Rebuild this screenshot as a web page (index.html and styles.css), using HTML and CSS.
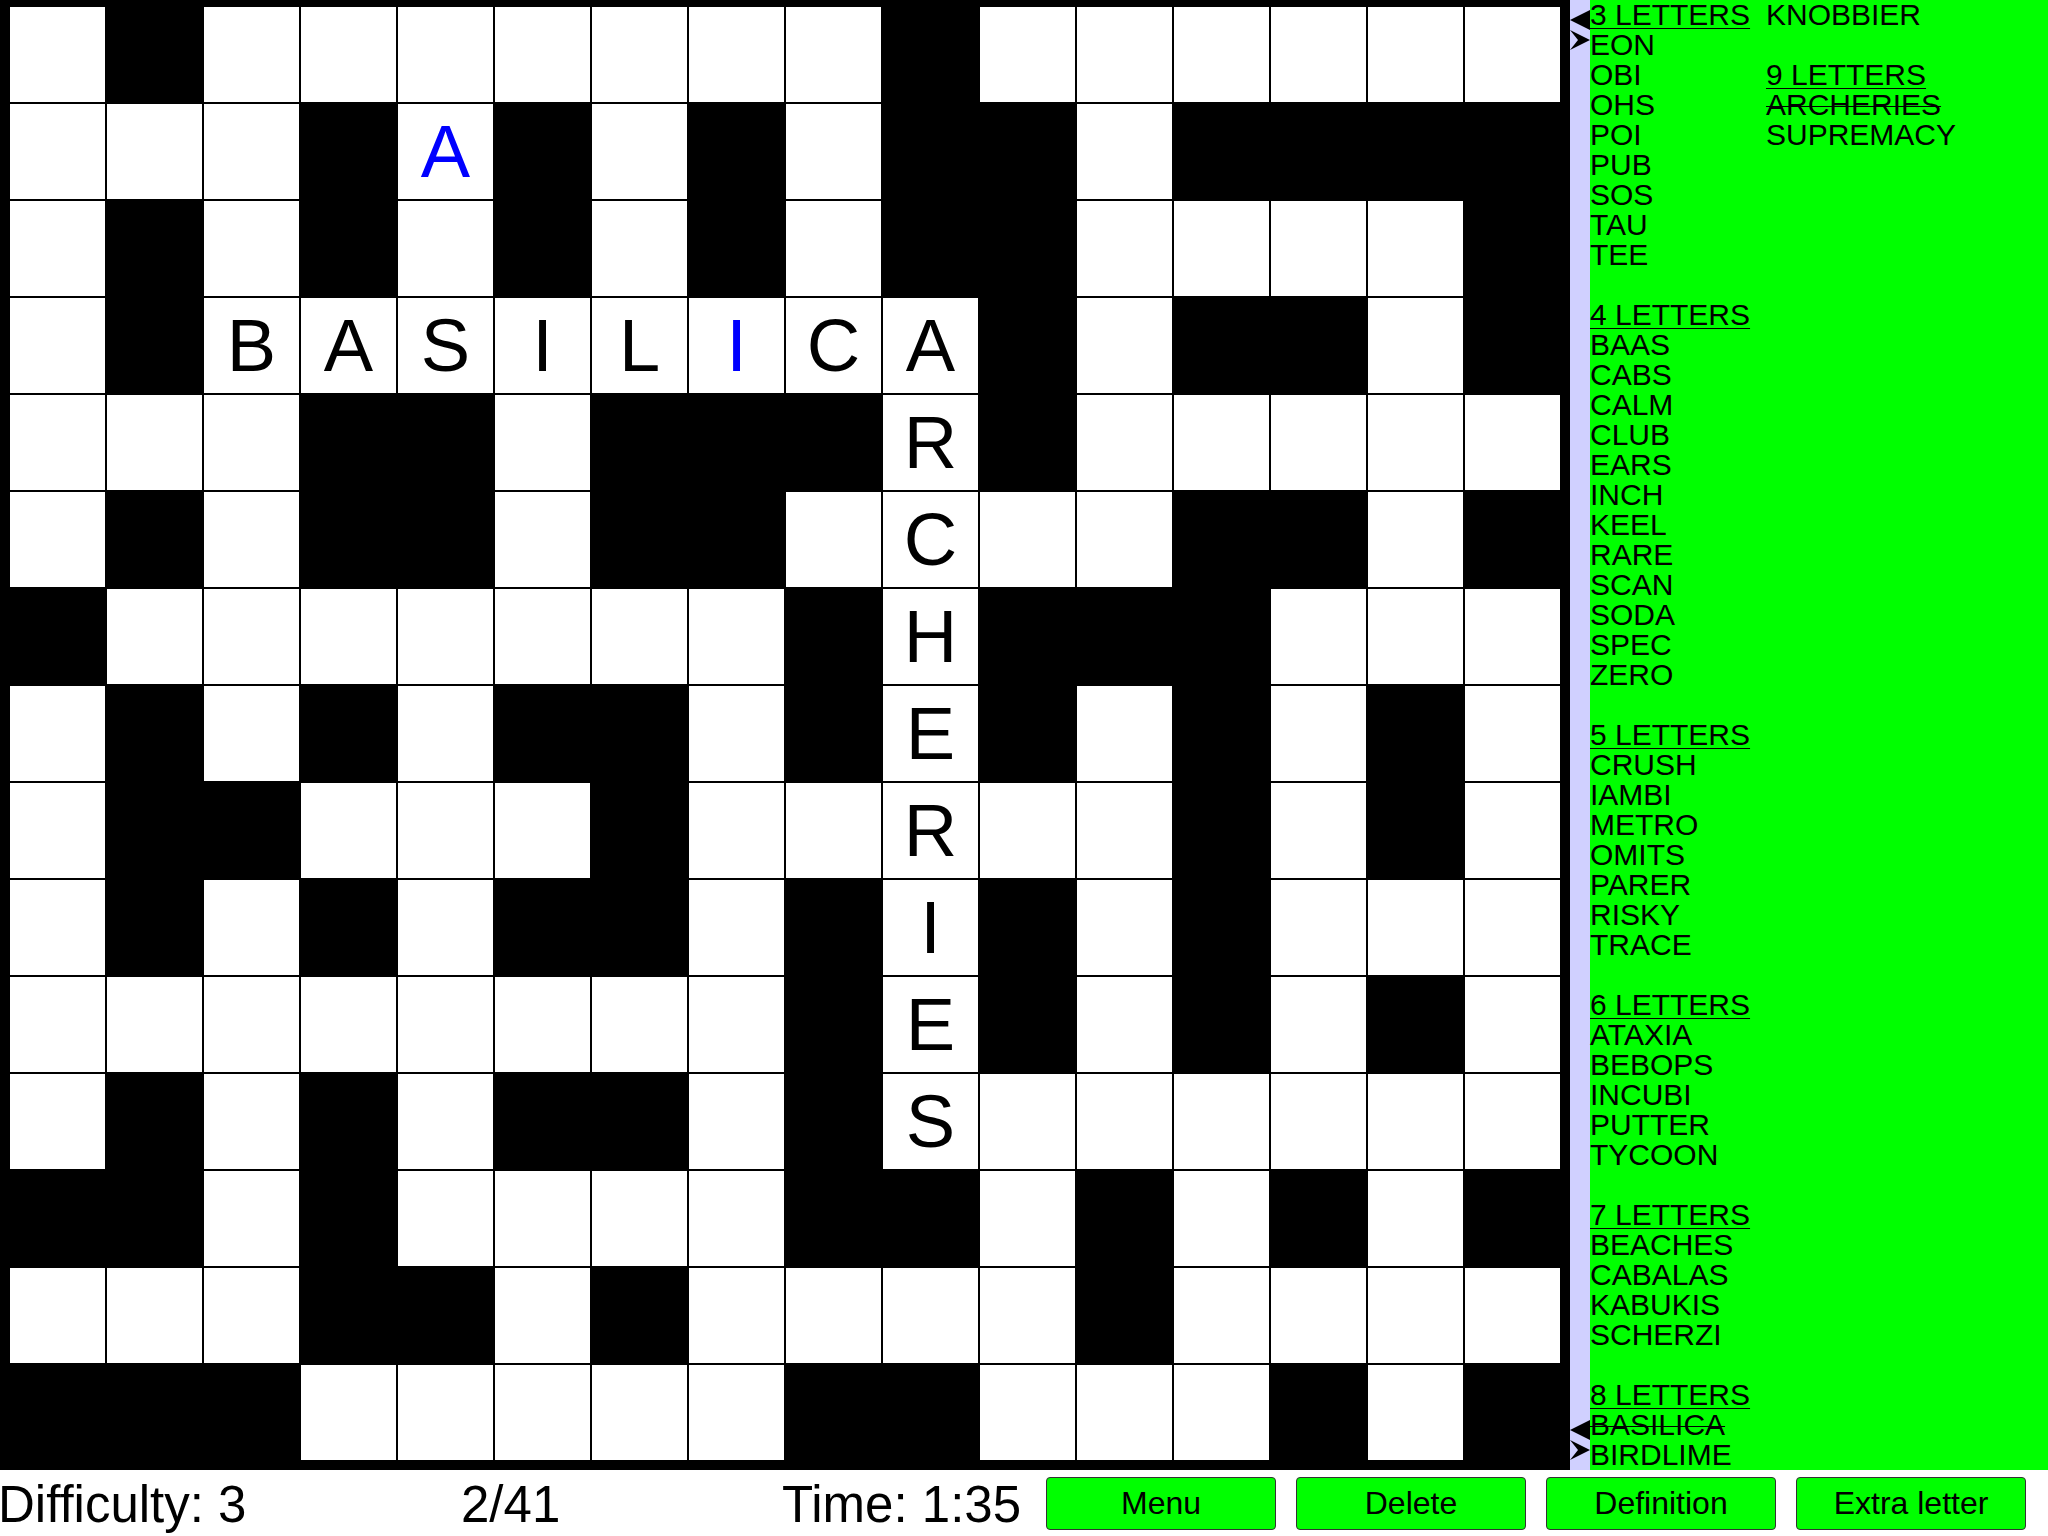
FILE: index.html
```html
<!DOCTYPE html>
<html lang="en">
<head>
<meta charset="utf-8">
<title>Crossword</title>
<link rel="stylesheet" href="styles.css">
</head>
<body>
<div class="app">
  <div class="board">
    <!-- row 0 -->
    <div class="cell"></div><div class="cell blk"></div><div class="cell"></div><div class="cell"></div><div class="cell"></div><div class="cell"></div><div class="cell"></div><div class="cell"></div><div class="cell"></div><div class="cell blk"></div><div class="cell"></div><div class="cell"></div><div class="cell"></div><div class="cell"></div><div class="cell"></div><div class="cell"></div>
    <!-- row 1 -->
    <div class="cell"></div><div class="cell"></div><div class="cell"></div><div class="cell blk"></div><div class="cell hint">A</div><div class="cell blk"></div><div class="cell"></div><div class="cell blk"></div><div class="cell"></div><div class="cell blk"></div><div class="cell blk"></div><div class="cell"></div><div class="cell blk"></div><div class="cell blk"></div><div class="cell blk"></div><div class="cell blk"></div>
    <!-- row 2 -->
    <div class="cell"></div><div class="cell blk"></div><div class="cell"></div><div class="cell blk"></div><div class="cell"></div><div class="cell blk"></div><div class="cell"></div><div class="cell blk"></div><div class="cell"></div><div class="cell blk"></div><div class="cell blk"></div><div class="cell"></div><div class="cell"></div><div class="cell"></div><div class="cell"></div><div class="cell blk"></div>
    <!-- row 3 -->
    <div class="cell"></div><div class="cell blk"></div><div class="cell">B</div><div class="cell">A</div><div class="cell">S</div><div class="cell">I</div><div class="cell">L</div><div class="cell hint">I</div><div class="cell">C</div><div class="cell">A</div><div class="cell blk"></div><div class="cell"></div><div class="cell blk"></div><div class="cell blk"></div><div class="cell"></div><div class="cell blk"></div>
    <!-- row 4 -->
    <div class="cell"></div><div class="cell"></div><div class="cell"></div><div class="cell blk"></div><div class="cell blk"></div><div class="cell"></div><div class="cell blk"></div><div class="cell blk"></div><div class="cell blk"></div><div class="cell">R</div><div class="cell blk"></div><div class="cell"></div><div class="cell"></div><div class="cell"></div><div class="cell"></div><div class="cell"></div>
    <!-- row 5 -->
    <div class="cell"></div><div class="cell blk"></div><div class="cell"></div><div class="cell blk"></div><div class="cell blk"></div><div class="cell"></div><div class="cell blk"></div><div class="cell blk"></div><div class="cell"></div><div class="cell">C</div><div class="cell"></div><div class="cell"></div><div class="cell blk"></div><div class="cell blk"></div><div class="cell"></div><div class="cell blk"></div>
    <!-- row 6 -->
    <div class="cell blk"></div><div class="cell"></div><div class="cell"></div><div class="cell"></div><div class="cell"></div><div class="cell"></div><div class="cell"></div><div class="cell"></div><div class="cell blk"></div><div class="cell">H</div><div class="cell blk"></div><div class="cell blk"></div><div class="cell blk"></div><div class="cell"></div><div class="cell"></div><div class="cell"></div>
    <!-- row 7 -->
    <div class="cell"></div><div class="cell blk"></div><div class="cell"></div><div class="cell blk"></div><div class="cell"></div><div class="cell blk"></div><div class="cell blk"></div><div class="cell"></div><div class="cell blk"></div><div class="cell">E</div><div class="cell blk"></div><div class="cell"></div><div class="cell blk"></div><div class="cell"></div><div class="cell blk"></div><div class="cell"></div>
    <!-- row 8 -->
    <div class="cell"></div><div class="cell blk"></div><div class="cell blk"></div><div class="cell"></div><div class="cell"></div><div class="cell"></div><div class="cell blk"></div><div class="cell"></div><div class="cell"></div><div class="cell">R</div><div class="cell"></div><div class="cell"></div><div class="cell blk"></div><div class="cell"></div><div class="cell blk"></div><div class="cell"></div>
    <!-- row 9 -->
    <div class="cell"></div><div class="cell blk"></div><div class="cell"></div><div class="cell blk"></div><div class="cell"></div><div class="cell blk"></div><div class="cell blk"></div><div class="cell"></div><div class="cell blk"></div><div class="cell">I</div><div class="cell blk"></div><div class="cell"></div><div class="cell blk"></div><div class="cell"></div><div class="cell"></div><div class="cell"></div>
    <!-- row 10 -->
    <div class="cell"></div><div class="cell"></div><div class="cell"></div><div class="cell"></div><div class="cell"></div><div class="cell"></div><div class="cell"></div><div class="cell"></div><div class="cell blk"></div><div class="cell">E</div><div class="cell blk"></div><div class="cell"></div><div class="cell blk"></div><div class="cell"></div><div class="cell blk"></div><div class="cell"></div>
    <!-- row 11 -->
    <div class="cell"></div><div class="cell blk"></div><div class="cell"></div><div class="cell blk"></div><div class="cell"></div><div class="cell blk"></div><div class="cell blk"></div><div class="cell"></div><div class="cell blk"></div><div class="cell">S</div><div class="cell"></div><div class="cell"></div><div class="cell"></div><div class="cell"></div><div class="cell"></div><div class="cell"></div>
    <!-- row 12 -->
    <div class="cell blk"></div><div class="cell blk"></div><div class="cell"></div><div class="cell blk"></div><div class="cell"></div><div class="cell"></div><div class="cell"></div><div class="cell"></div><div class="cell blk"></div><div class="cell blk"></div><div class="cell"></div><div class="cell blk"></div><div class="cell"></div><div class="cell blk"></div><div class="cell"></div><div class="cell blk"></div>
    <!-- row 13 -->
    <div class="cell"></div><div class="cell"></div><div class="cell"></div><div class="cell blk"></div><div class="cell blk"></div><div class="cell"></div><div class="cell blk"></div><div class="cell"></div><div class="cell"></div><div class="cell"></div><div class="cell"></div><div class="cell blk"></div><div class="cell"></div><div class="cell"></div><div class="cell"></div><div class="cell"></div>
    <!-- row 14 -->
    <div class="cell blk"></div><div class="cell blk"></div><div class="cell blk"></div><div class="cell"></div><div class="cell"></div><div class="cell"></div><div class="cell"></div><div class="cell"></div><div class="cell blk"></div><div class="cell blk"></div><div class="cell"></div><div class="cell"></div><div class="cell"></div><div class="cell blk"></div><div class="cell"></div><div class="cell blk"></div>
  </div>

  <div class="strip">
    <svg class="arrows" width="20" height="40" viewBox="0 0 20 40">
      <polygon points="0,10 20,0 20,20" fill="#000"/>
      <polygon points="0,20 20,30 0,40 8,30" fill="#000"/>
    </svg>
    <svg class="arrows" width="20" height="40" viewBox="0 0 20 40">
      <polygon points="0,10 20,0 20,20" fill="#000"/>
      <polygon points="0,20 20,30 0,40 8,30" fill="#000"/>
    </svg>
  </div>

  <div class="words">
    <div class="col col1">
      <div class="hdr">3 LETTERS</div>
      <div>EON</div><div>OBI</div><div>OHS</div><div>POI</div><div>PUB</div><div>SOS</div><div>TAU</div><div>TEE</div>
      <div class="gap"></div>
      <div class="hdr">4 LETTERS</div>
      <div>BAAS</div><div>CABS</div><div>CALM</div><div>CLUB</div><div>EARS</div><div>INCH</div><div>KEEL</div><div>RARE</div><div>SCAN</div><div>SODA</div><div>SPEC</div><div>ZERO</div>
      <div class="gap"></div>
      <div class="hdr">5 LETTERS</div>
      <div>CRUSH</div><div>IAMBI</div><div>METRO</div><div>OMITS</div><div>PARER</div><div>RISKY</div><div>TRACE</div>
      <div class="gap"></div>
      <div class="hdr">6 LETTERS</div>
      <div>ATAXIA</div><div>BEBOPS</div><div>INCUBI</div><div>PUTTER</div><div>TYCOON</div>
      <div class="gap"></div>
      <div class="hdr">7 LETTERS</div>
      <div>BEACHES</div><div>CABALAS</div><div>KABUKIS</div><div>SCHERZI</div>
      <div class="gap"></div>
      <div class="hdr">8 LETTERS</div>
      <div class="done">BASILICA</div><div>BIRDLIME</div>
    </div>
    <div class="col col2">
      <div>KNOBBIER</div>
      <div class="gap"></div>
      <div class="hdr">9 LETTERS</div>
      <div class="done">ARCHERIES</div>
      <div>SUPREMACY</div>
    </div>
  </div>

  <div class="status">
    <span class="stat s-diff">Difficulty: 3</span>
    <span class="stat s-count">2/41</span>
    <span class="stat s-time">Time: 1:35</span>
    <div class="buttons">
      <button class="btn">Menu</button>
      <button class="btn">Delete</button>
      <button class="btn">Definition</button>
      <button class="btn">Extra letter</button>
    </div>
  </div>
</div>
</body>
</html>
```

FILE: styles.css
```css
html, body {
  margin: 0;
  padding: 0;
  background: #ffffff;
}

body {
  width: 2048px;
  height: 1536px;
  overflow: hidden;
  font-family: "Liberation Sans", Arial, sans-serif;
  color: #000;
}

.app {
  display: grid;
  grid-template-columns: 1570px 20px 458px;
  grid-template-rows: 1470px 66px;
  width: 2048px;
  height: 1536px;
}

/* ---------- board ---------- */
.board {
  background: #000;
  padding: 7px 10px 10px 10px;
  display: grid;
  grid-template-columns: repeat(16, 95px);
  grid-template-rows: repeat(15, 95px);
  gap: 2px;
}

.cell {
  background: #fff;
  display: flex;
  align-items: center;
  justify-content: center;
  font-size: 74px;
  line-height: 1;
  color: #000;
}

.cell.blk {
  background: #000;
}

.cell.hint {
  color: #0000ff;
}

/* ---------- scroll strip ---------- */
.strip {
  background: #d0d0ff;
  display: flex;
  flex-direction: column;
  justify-content: space-between;
  padding: 10px 0;
}

.arrows {
  display: block;
}

/* ---------- word list ---------- */
.words {
  background: #00ff00;
  display: flex;
  font-size: 30px;
  line-height: 30px;
}

.col1 {
  width: 176px;
}

.col div {
  height: 30px;
  white-space: nowrap;
}

.col .gap {
  height: 30px;
}

.hdr {
  text-decoration: underline;
  text-decoration-thickness: 1px;
  text-underline-offset: 3px;
}

.done {
  text-decoration: line-through;
  text-decoration-thickness: 1px;
}

/* ---------- status bar ---------- */
.status {
  grid-column: 1 / -1;
  display: flex;
  align-items: center;
  background: #fff;
}

.stat {
  font-size: 51px;
  line-height: 66px;
  padding-top: 3px;
  white-space: nowrap;
}

.s-diff {
  margin-left: -2px;
  width: 463px;
}

.s-count {
  width: 321px;
}

.s-time {
  width: 264px;
}

.buttons {
  display: flex;
  gap: 20px;
}

.btn {
  width: 230px;
  height: 53px;
  background: #00ff00;
  border: 1px solid #333;
  border-radius: 4px;
  font-family: "Liberation Sans", Arial, sans-serif;
  font-size: 32px;
  color: #000;
  padding: 0;
  margin: 0;
  line-height: 1;
}
```
